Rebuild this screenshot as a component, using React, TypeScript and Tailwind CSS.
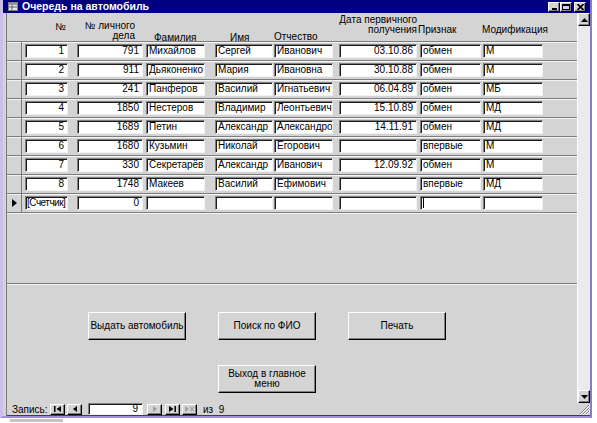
import React from "react";

type Row = { n: string; d: string; f: string; i: string; o: string; dt: string; p: string; m: string };

const rows: Row[] = [
  { n: "1", d: "791", f: "Михайлов", i: "Сергей", o: "Иванович", dt: "03.10.86", p: "обмен", m: "М" },
  { n: "2", d: "911", f: "Дьяконенко", i: "Мария", o: "Ивановна", dt: "30.10.88", p: "обмен", m: "М" },
  { n: "3", d: "241", f: "Панферов", i: "Василий", o: "Игнатьевич", dt: "06.04.89", p: "обмен", m: "МБ" },
  { n: "4", d: "1850", f: "Нестеров", i: "Владимир", o: "Леонтьевич", dt: "15.10.89", p: "обмен", m: "МД" },
  { n: "5", d: "1689", f: "Петин", i: "Александр", o: "Александрович", dt: "14.11.91", p: "обмен", m: "МД" },
  { n: "6", d: "1680", f: "Кузьмин", i: "Николай", o: "Егорович", dt: "", p: "впервые", m: "М" },
  { n: "7", d: "330", f: "Секретарёв", i: "Александр", o: "Иванович", dt: "12.09.92", p: "обмен", m: "М" },
  { n: "8", d: "1748", f: "Макеев", i: "Василий", o: "Ефимович", dt: "", p: "впервые", m: "МД" },
];

const cols: { cls: string; right: boolean; key: keyof Row }[] = [
  { cls: "ml-[3px] w-[43px]", right: true, key: "n" },
  { cls: "ml-[9px] w-[66px]", right: true, key: "d" },
  { cls: "ml-[3px] w-[59px]", right: false, key: "f" },
  { cls: "ml-[10px] w-[58px]", right: false, key: "i" },
  { cls: "ml-[1px] w-[59px]", right: false, key: "o" },
  { cls: "ml-[6px] w-[78px]", right: true, key: "dt" },
  { cls: "ml-[3px] w-[61px]", right: false, key: "p" },
  { cls: "ml-[2px] w-[60px]", right: false, key: "m" },
];

function Box({ cls, right, children }: { cls: string; right: boolean; children?: React.ReactNode }) {
  return (
    <div
      className={`${cls} mt-[2px] h-[14px] bg-white border border-t-[#808080] border-l-[#808080] border-r-[#f2f2f2] border-b-[#f2f2f2] shadow-[inset_1px_1px_0_#1a1a1a] overflow-hidden whitespace-nowrap leading-[12px] ${
        right ? "text-right pr-[3px]" : "text-left pl-[2px]"
      }`}
    >
      {children}
    </div>
  );
}

const raised =
  "bg-[#d4d4d4] border border-t-white border-l-white border-r-black border-b-black shadow-[inset_-1px_-1px_0_#808080]";

function FormButton({ children, cls }: { children: React.ReactNode; cls: string }) {
  return (
    <div className={`${cls} w-[98px] h-[28px] ${raised} flex items-center justify-center text-center leading-[10px]`}>
      {children}
    </div>
  );
}

function NavBtn({ children, cls }: { children: React.ReactNode; cls: string }) {
  return <div className={`${cls} w-[15px] h-[11px] ${raised} flex items-center justify-center`}>{children}</div>;
}

export default function App() {
  return (
    <div className="w-[597px] h-[423px] bg-white overflow-hidden font-['Liberation_Sans',Arial,sans-serif] text-[10px] text-black">
      <div className="w-[592px] h-[418px] flex flex-col border-l-[3px] border-l-[#cbbfe9] border-r-2 border-r-[#8f78c8] border-b-2 border-b-[#a48ed6]">
        {/* Title bar */}
        <div className="h-[13px] bg-[#000080] flex items-center pl-[5px] pr-[4px]">
          <svg width="10" height="9" viewBox="0 0 10 9">
            <rect x="0.5" y="0.5" width="9" height="8" fill="#e8e8e8" stroke="#808080" />
            <rect x="1" y="1" width="8" height="2" fill="#9a9a9a" />
            <line x1="1" y1="5" x2="9" y2="5" stroke="#606060" />
            <line x1="4" y1="3" x2="4" y2="8" stroke="#606060" />
          </svg>
          <div className="ml-[4px] text-white font-bold text-[10.5px] leading-[13px] whitespace-nowrap">Очередь на автомобиль</div>
          <div className="flex-1" />
          <div className={`w-[12px] h-[10px] ${raised} flex items-end justify-center pb-[1px]`}>
            <div className="w-[5px] h-[2px] bg-black" />
          </div>
          <div className={`w-[12px] h-[10px] ${raised} flex items-center justify-center`}>
            <div className="w-[8px] h-[6px] border border-black border-t-2" />
          </div>
          <div className={`ml-[2px] w-[12px] h-[10px] ${raised} flex items-center justify-center`}>
            <svg width="7" height="6" viewBox="0 0 7 6">
              <path d="M0.5 0 L6.5 6 M6.5 0 L0.5 6" stroke="black" strokeWidth="1.6" />
            </svg>
          </div>
        </div>

        {/* Client area */}
        <div className="flex-1 flex flex-col bg-[#d4d4d4] pl-[3px]">
          <div className="flex-1 flex flex-col border-l border-l-[#7a7a7a]">
            <div className="flex h-[390px]">
              {/* Form main */}
              <div className="flex-1 flex flex-col">
                {/* Header */}
                <div className="h-[28px] flex items-start leading-[10px] whitespace-nowrap">
                  <div className="ml-[15px] w-[44px] mt-[9px] text-right">№</div>
                  <div className="ml-[11px] w-[58px] mt-[8px] text-right">
                    № личного
                    <br />
                    дела
                  </div>
                  <div className="ml-[19px] w-[50px] mt-[20px]">Фамилия</div>
                  <div className="ml-[26px] w-[30px] mt-[20px]">Имя</div>
                  <div className="ml-[14px] w-[50px] mt-[19px]">Отчество</div>
                  <div className="ml-[6px] w-[87px] mt-[2px] text-right">
                    Дата первичного
                    <br />
                    получения
                  </div>
                  <div className="w-[60px] mt-[12px] pl-[1px]">Признак</div>
                  <div className="ml-[5px] w-[66px] mt-[12px]">Модификация</div>
                </div>

                {/* Detail rows */}
                {rows.map((r) => (
                  <div key={r.n} className="h-[19px] flex items-start border-t border-t-[#7d7d7d] shadow-[inset_0_1px_0_#f4f4f4]">
                    <div className="w-[15px] h-full border-r border-r-[#7d7d7d]" />
                    {cols.map((c) => (
                      <Box key={c.key} cls={c.cls} right={c.right}>
                        {r[c.key]}
                      </Box>
                    ))}
                  </div>
                ))}
                {/* New record row */}
                <div className="h-[19px] flex items-start border-t border-t-[#7d7d7d] shadow-[inset_0_1px_0_#f4f4f4]">
                  <div className="w-[15px] h-full border-r border-r-[#7d7d7d] flex items-center justify-center">
                    <svg width="5" height="8" viewBox="0 0 5 8">
                      <path d="M0 0 L5 4 L0 8 Z" fill="black" />
                    </svg>
                  </div>
                  <Box cls={cols[0].cls} right={false}>
                    <span className="tracking-[-0.5px] -ml-[1px]">[Счетчик]</span>
                  </Box>
                  <Box cls={cols[1].cls} right={true}>
                    0
                  </Box>
                  <Box cls={cols[2].cls} right={false} />
                  <Box cls={cols[3].cls} right={false} />
                  <Box cls={cols[4].cls} right={false} />
                  <Box cls={cols[5].cls} right={false} />
                  <Box cls={cols[6].cls} right={false}>
                    <div className="w-[1px] h-[10px] bg-black mt-[1px]" />
                  </Box>
                  <Box cls={cols[7].cls} right={false} />
                </div>
                <div className="flex-1 border-t border-t-[#7d7d7d] shadow-[inset_0_1px_0_#f4f4f4]" />

                {/* Footer */}
                <div className="h-[120px] border-t border-t-[#7d7d7d] shadow-[inset_0_1px_0_#f4f4f4] pt-[28px] pl-[81px]">
                  <div className="flex">
                    <FormButton cls="">Выдать автомобиль</FormButton>
                    <FormButton cls="ml-[32px]">Поиск по ФИО</FormButton>
                    <FormButton cls="ml-[32px]">Печать</FormButton>
                  </div>
                  <div className="flex mt-[25px]">
                    <FormButton cls="ml-[130px]">
                      Выход в главное
                      <br />
                      меню
                    </FormButton>
                  </div>
                </div>
              </div>

              {/* Vertical scrollbar */}
              <div className="w-[13px] flex flex-col bg-[#ebebeb] border-l border-l-white">
                <div className={`h-[13px] ${raised} flex items-center justify-center`}>
                  <svg width="7" height="4" viewBox="0 0 7 4">
                    <path d="M3.5 0 L7 4 L0 4 Z" fill="black" />
                  </svg>
                </div>
                <div className="flex-1" />
                <div className={`h-[13px] ${raised} flex items-center justify-center`}>
                  <svg width="7" height="4" viewBox="0 0 7 4">
                    <path d="M0 0 L7 0 L3.5 4 Z" fill="black" />
                  </svg>
                </div>
              </div>
            </div>

            {/* Navigation bar */}
            <div className="h-[13px] flex items-center border-b border-b-[#404040]">
              <div className="ml-[5px] w-[38px] leading-[11px] whitespace-nowrap">Запись:</div>
              <NavBtn cls="">
                <svg width="7" height="6" viewBox="0 0 7 6">
                  <rect x="0" y="0" width="1.5" height="6" fill="black" />
                  <path d="M7 0 L2.5 3 L7 6 Z" fill="black" />
                </svg>
              </NavBtn>
              <NavBtn cls="ml-[2px]">
                <svg width="4" height="6" viewBox="0 0 4 6">
                  <path d="M4 0 L0 3 L4 6 Z" fill="black" />
                </svg>
              </NavBtn>
              <div className="ml-[6px] w-[55px] h-[12px] bg-white border border-t-[#808080] border-l-[#808080] border-r-[#f2f2f2] border-b-[#f2f2f2] shadow-[inset_1px_1px_0_#1a1a1a] text-right pr-[4px] leading-[10px]">
                9
              </div>
              <NavBtn cls="ml-[4px]">
                <svg width="4" height="6" viewBox="0 0 4 6">
                  <path d="M0 0 L4 3 L0 6 Z" fill="#a0a0a0" />
                </svg>
              </NavBtn>
              <NavBtn cls="ml-[3px]">
                <svg width="7" height="6" viewBox="0 0 7 6">
                  <path d="M0 0 L4.5 3 L0 6 Z" fill="black" />
                  <rect x="5.5" y="0" width="1.5" height="6" fill="black" />
                </svg>
              </NavBtn>
              <NavBtn cls="ml-[2px]">
                <svg width="9" height="6" viewBox="0 0 9 6">
                  <path d="M0 0 L4 3 L0 6 Z" fill="#a0a0a0" />
                  <path d="M5 1 L9 5 M9 1 L5 5 M7 0.5 L7 5.5" stroke="#a0a0a0" strokeWidth="1" />
                </svg>
              </NavBtn>
              <div className="ml-[6px] leading-[11px] whitespace-nowrap">из&nbsp;&nbsp;9</div>
              <div className="flex-1" />
              <div className="w-[13px] h-[12px] flex items-end justify-end">
                <svg width="11" height="11" viewBox="0 0 11 11">
                  <path d="M10 1 L1 10 M10 4 L4 10 M10 7 L7 10" stroke="#808080" strokeWidth="1" />
                  <path d="M11 1 L1 11 M11 4 L4 11 M11 7 L7 11" stroke="#ffffff" strokeWidth="1" />
                </svg>
              </div>
            </div>
          </div>
        </div>
      </div>
      <div className="ml-[10px] mt-[1px] w-[53px] h-[3px] bg-[#c4c4c4]" />
    </div>
  );
}
